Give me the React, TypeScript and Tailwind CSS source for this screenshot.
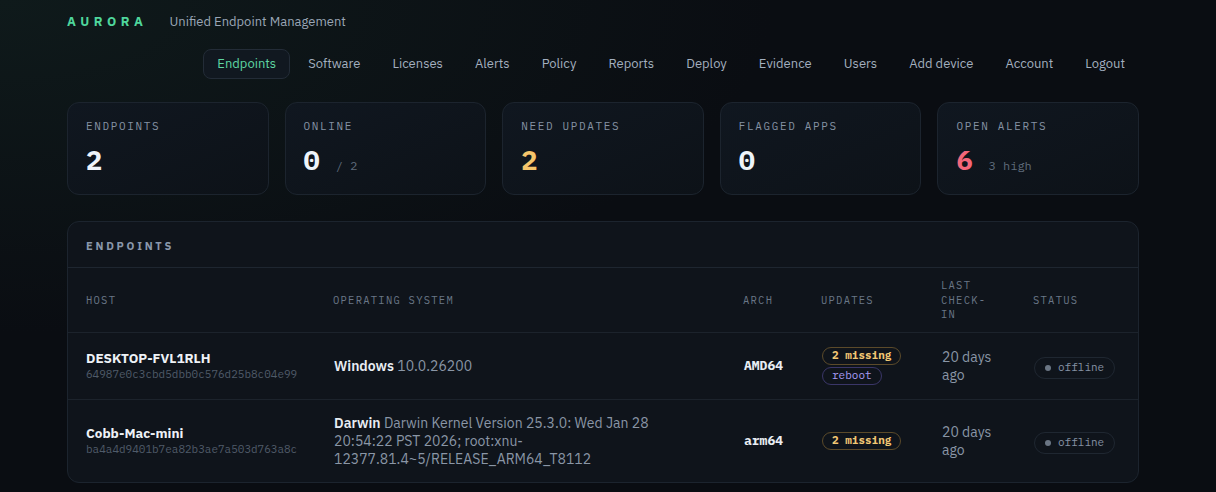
import React from 'react';

const sans = "font-['IBM_Plex_Sans','Noto_Sans',sans-serif]";
const mono = "font-['IBM_Plex_Mono','DejaVu_Sans_Mono',monospace]";

const navItems = [
  'Endpoints', 'Software', 'Licenses', 'Alerts', 'Policy', 'Reports',
  'Deploy', 'Evidence', 'Users', 'Add device', 'Account', 'Logout',
];

type Stat = { label: string; value: string; tone: string; note?: string };

const stats: Stat[] = [
  { label: 'ENDPOINTS', value: '2', tone: 'text-[#eef4fa]' },
  { label: 'ONLINE', value: '0', tone: 'text-[#eef4fa]', note: '/ 2' },
  { label: 'NEED UPDATES', value: '2', tone: 'text-[#f5c56b]' },
  { label: 'FLAGGED APPS', value: '0', tone: 'text-[#eef4fa]' },
  { label: 'OPEN ALERTS', value: '6', tone: 'text-[#f2677a]', note: '3 high' },
];

type Device = {
  host: string;
  id: string;
  osName: string;
  osVersion: string;
  arch: string;
  reboot: boolean;
};

const devices: Device[] = [
  {
    host: 'DESKTOP-FVL1RLH',
    id: '64987e0c3cbd5dbb0c576d25b8c04e99',
    osName: 'Windows',
    osVersion: '10.0.26200',
    arch: 'AMD64',
    reboot: true,
  },
  {
    host: 'Cobb-Mac-mini',
    id: 'ba4a4d9401b7ea82b3ae7a503d763a8c',
    osName: 'Darwin',
    osVersion: 'Darwin Kernel Version 25.3.0: Wed Jan 28 20:54:22 PST 2026; root:xnu-12377.81.4~5/RELEASE_ARM64_T8112',
    arch: 'arm64',
    reboot: false,
  },
];

const cols = 'grid grid-cols-[247px_410px_78px_120px_92px_125px]';

function StatCard({ stat }: { stat: Stat }) {
  return (
    <div className="rounded-xl border border-[#1c242e] bg-gradient-to-br from-[#101720] to-[#0d1218] px-[18px] pt-[15px] pb-[18px]">
      <div className={`${mono} text-[11px] leading-4 tracking-[0.15em] text-[#8592a3]`}>{stat.label}</div>
      <div className="mt-[10px] flex items-baseline gap-4">
        <span className={`${mono} text-[27px] leading-8 font-bold ${stat.tone}`}>{stat.value}</span>
        {stat.note && (
          <span className={`${mono} text-[12px] text-[#5f6b7a]`}>{stat.note}</span>
        )}
      </div>
    </div>
  );
}

function Badge({ children, tone }: { children: React.ReactNode; tone: 'amber' | 'violet' }) {
  const styles =
    tone === 'amber'
      ? 'border-[#5b4a2a] text-[#f2c774] font-bold'
      : 'border-[#3a3668] text-[#a99cf5]';
  return (
    <span className={`${mono} inline-flex h-[18px] items-center rounded-full border px-[9px] text-[11px] ${styles}`}>
      {children}
    </span>
  );
}

function DeviceRow({ d, last }: { d: Device; last: boolean }) {
  return (
    <div className={`${cols} items-center py-[14px] ${last ? '' : 'border-b border-[#1c232c]'}`}>
      <div className="px-[18px]">
        <div className={`${sans} text-[13.5px] leading-[17px] font-bold text-[#eef2f7]`}>{d.host}</div>
        <div className={`${mono} text-[11px] leading-[14px] text-[#4f5b69]`}>{d.id}</div>
      </div>
      <div className={`${sans} px-[19px] text-[14px] leading-[18px] text-[#8a96a6]`}>
        <span className="font-semibold text-[#e8edf3]">{d.osName}</span> {d.osVersion}
      </div>
      <div className={`${mono} px-[19px] text-[13px] font-bold text-[#e8edf3]`}>{d.arch}</div>
      <div className="flex flex-col items-start gap-[2px] px-[19px]">
        <Badge tone="amber">2 missing</Badge>
        {d.reboot && <Badge tone="violet">reboot</Badge>}
      </div>
      <div className={`${sans} px-[19px] text-[14px] leading-[18px] text-[#8a96a6]`}>20 days ago</div>
      <div className="px-[19px]">
        <span className={`${mono} inline-flex h-[22px] items-center gap-[7px] rounded-full border border-[#1f2731] px-[10px] text-[11px] text-[#8592a3]`}>
          <span className="h-[6px] w-[6px] rounded-full bg-[#6b7684]" />
          offline
        </span>
      </div>
    </div>
  );
}

export default function App() {
  const headers = ['HOST', 'OPERATING SYSTEM', 'ARCH', 'UPDATES', 'LAST CHECK-IN', 'STATUS'];

  return (
    <div className="min-h-[492px] bg-[#0a0d12] bg-[radial-gradient(ellipse_at_0%_0%,#0f1a1b_0%,#0a0d12_45%)]">
      <div className="ml-[67px] w-[1072px] pt-[14px] pb-10">
        {/* Brand */}
        <div className="flex items-center gap-[22px]">
          <span className={`${sans} text-[13px] leading-4 font-bold tracking-[0.35em] text-[#4fd69c]`}>AURORA</span>
          <span className={`${sans} text-[13px] leading-4 text-[#9aa6b6]`}>Unified Endpoint Management</span>
        </div>

        {/* Nav */}
        <nav className="mt-[19px] flex justify-end gap-1">
          {navItems.map((item, i) => (
            <a
              key={item}
              className={`${sans} h-[30px] flex items-center rounded-lg border px-[13px] text-[13px] ${
                i === 0
                  ? 'border-[#232c37] bg-[#111820] text-[#5ed6a3]'
                  : 'border-transparent text-[#a3afbf]'
              }`}
            >
              {item}
            </a>
          ))}
        </nav>

        {/* Stats */}
        <div className="mt-[23px] grid grid-cols-5 gap-4">
          {stats.map(s => (
            <StatCard key={s.label} stat={s} />
          ))}
        </div>

        {/* Endpoints table */}
        <div className="mt-[26px] overflow-hidden rounded-xl border border-[#1c242e] bg-[#0f141b]">
          <div className={`${sans} border-b border-[#1e2630] px-[18px] pt-[17px] pb-[14px] text-[11px] leading-[14px] font-bold tracking-[0.25em] text-[#8a98ac]`}>
            ENDPOINTS
          </div>
          <div className={`${cols} items-center border-b border-[#1c232c] py-[10px]`}>
            {headers.map(h => (
              <div key={h} className={`${mono} px-[18px] text-[10.5px] leading-[14.5px] tracking-[0.12em] text-[#6a7787]`}>
                {h}
              </div>
            ))}
          </div>
          {devices.map((d, i) => (
            <DeviceRow key={d.host} d={d} last={i === devices.length - 1} />
          ))}
        </div>
      </div>
    </div>
  );
}
